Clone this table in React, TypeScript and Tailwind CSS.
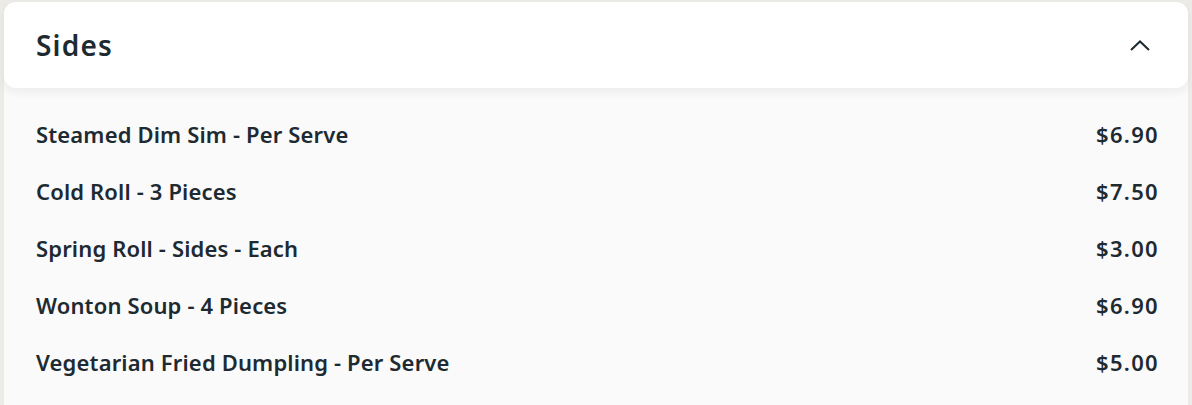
const ITEMS = [
  { name: 'Steamed Dim Sim - Per Serve', price: '$6.90' },
  { name: 'Cold Roll - 3 Pieces', price: '$7.50' },
  { name: 'Spring Roll - Sides - Each', price: '$3.00' },
  { name: 'Wonton Soup - 4 Pieces', price: '$6.90' },
  { name: 'Vegetarian Fried Dumpling - Per Serve', price: '$5.00' },
]

export default function App() {
  return (
    <div className="h-[405px] overflow-hidden bg-[#ecebe7] pl-1 pr-1 pt-[2px] font-['Noto_Sans',sans-serif] text-[#1e2a32]">
      <section className="h-[420px] rounded-xl bg-[#fafafa]">
        <header className="relative z-10 flex h-[86px] items-center justify-between rounded-xl bg-white pl-8 pr-[38px] shadow-[0_4px_8px_rgba(0,0,0,0.06)]">
          <h2 className="text-[28px] font-semibold tracking-[1.2px]">Sides</h2>
          <svg width="20" height="11" viewBox="0 0 20 11" fill="none" stroke="currentColor" strokeWidth="2" aria-hidden="true">
            <polyline points="1,10 10,1.5 19,10" />
          </svg>
        </header>
        <ul className="pt-[18px]">
          {ITEMS.map((item) => (
            <li key={item.name} className="flex h-[57px] items-center justify-between pl-8 pr-[29px] text-[22px] font-semibold">
              <span className="tracking-[0.15px]">{item.name}</span>
              <span className="tracking-[1.3px]">{item.price}</span>
            </li>
          ))}
        </ul>
      </section>
    </div>
  )
}
